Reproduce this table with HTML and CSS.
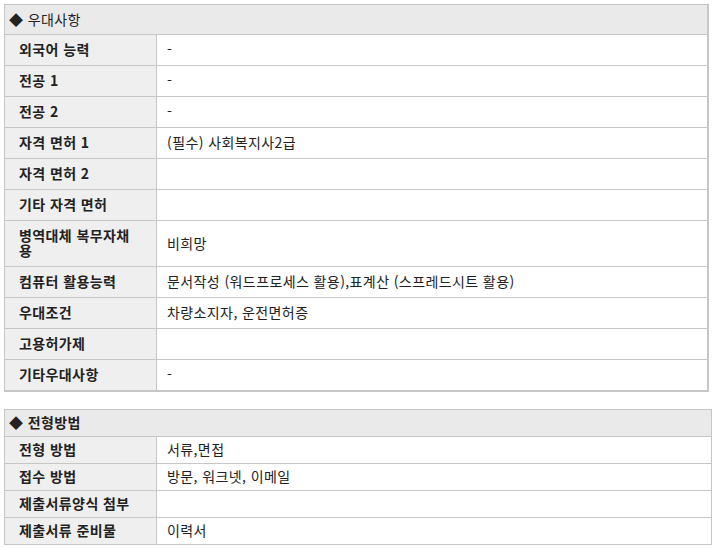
FILE: index.html
```html
<!DOCTYPE html>
<html lang="ko">
<head>
<meta charset="utf-8">
<title>우대사항</title>
<link rel="stylesheet" href="styles.css">
</head>
<body>
<div class="page">
  <table class="info info-a">
    <colgroup><col class="c-label"><col></colgroup>
    <tr><th colspan="2" class="head">◆ 우대사항</th></tr>
    <tr><th>외국어 능력</th><td>-</td></tr>
    <tr><th>전공 1</th><td>-</td></tr>
    <tr><th>전공 2</th><td>-</td></tr>
    <tr><th>자격 면허 1</th><td>(필수) 사회복지사2급</td></tr>
    <tr><th>자격 면허 2</th><td></td></tr>
    <tr><th>기타 자격 면허</th><td></td></tr>
    <tr><th>병역대체 복무자채용</th><td>비희망</td></tr>
    <tr><th>컴퓨터 활용능력</th><td>문서작성 (워드프로세스 활용),표계산 (스프레드시트 활용)</td></tr>
    <tr><th>우대조건</th><td>차량소지자, 운전면허증</td></tr>
    <tr><th>고용허가제</th><td></td></tr>
    <tr><th>기타우대사항</th><td>-</td></tr>
  </table>

  <table class="info info-b">
    <colgroup><col class="c-label"><col></colgroup>
    <tr><th colspan="2" class="head">◆ 전형방법</th></tr>
    <tr><th>전형 방법</th><td>서류,면접</td></tr>
    <tr><th>접수 방법</th><td>방문, 워크넷, 이메일</td></tr>
    <tr><th>제출서류양식 첨부</th><td></td></tr>
    <tr><th>제출서류 준비물</th><td>이력서</td></tr>
  </table>
</div>
</body>
</html>
```

FILE: styles.css
```css
html, body {
  margin: 0;
  padding: 0;
  background: #ffffff;
}

.page {
  padding: 4px 0 0 4px;
  display: flex;
  flex-direction: column;
  align-items: flex-start;
  gap: 17px;
  font-family: "Noto Sans CJK KR", "Noto Sans", sans-serif;
  font-size: 14px;
  line-height: 15px;
  letter-spacing: 0.4px;
  color: #222222;
}

.info {
  border-collapse: collapse;
  table-layout: fixed;
  border: 1px solid #c6c6c6;
}

.info-a {
  width: 705px;
  border-right: 2px solid #c6c6c6;
  border-bottom: 2px solid #c6c6c6;
}

.info-b {
  width: 708px;
}

.c-label {
  width: 152px;
}

.info th,
.info td {
  border: 1px solid #c6c6c6;
  text-align: left;
  vertical-align: middle;
}

.info th {
  background: #efefef;
  font-weight: bold;
  padding: 7px 20px 8px 14px;
}

.info td {
  background: #ffffff;
  font-weight: normal;
  padding: 7px 10px 8px 10px;
}

.info-a th.head {
  background: #eaeaea;
  font-weight: normal;
  padding: 7px 4px 7px 4px;
}

.info-b th,
.info-b td {
  padding-top: 5px;
  padding-bottom: 6px;
}

.info-b th.head {
  background: #eaeaea;
  font-weight: bold;
  padding: 5px 4px 6px 4px;
}
```
